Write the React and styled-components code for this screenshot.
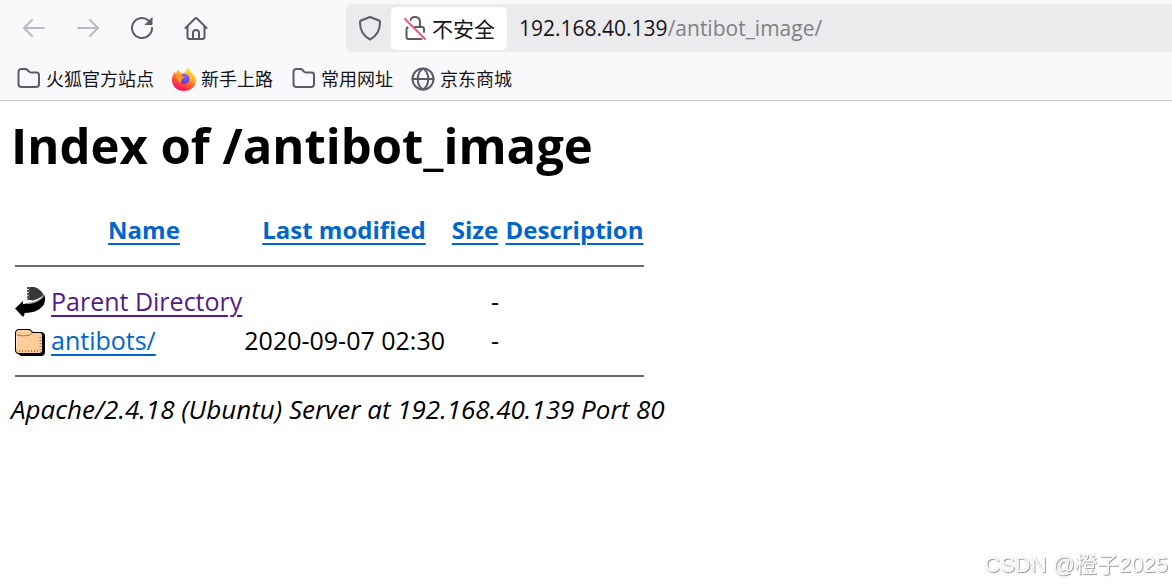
import { useState } from "react";
import styled, { createGlobalStyle } from "styled-components";

const GlobalStyle = createGlobalStyle`
  * {
    box-sizing: border-box;
  }

  body {
    margin: 0;
    background: #ffffff;
    color: #000000;
    font-family: "Open Sans", "Noto Sans CJK SC", sans-serif;
  }
`;

const Chrome = styled.header`
  background: #f9f9fb;
  border-bottom: 1px solid #cccccf;
`;

const NavBar = styled.nav`
  display: flex;
  align-items: center;
  height: 56px;
  padding-left: 7px;
`;

const NavButton = styled.button`
  display: flex;
  align-items: center;
  justify-content: center;
  width: 54px;
  height: 48px;
  padding: 0;
  border: 0;
  background: transparent;
  color: #5b5b66;
  opacity: ${props => (props.disabled ? 0.4 : 1)};
`;

const AddressBar = styled.div`
  display: flex;
  flex: 1;
  align-items: center;
  height: 48px;
  margin-left: 123px;
  padding-left: 12px;
  border-radius: 6px 0 0 6px;
  background: #ebebed;
  color: #5b5b66;
  font-size: 21px;
`;

const SecurityButton = styled.button`
  display: flex;
  align-items: center;
  gap: 4px;
  height: 43px;
  margin: 0 12px 0 9px;
  padding: 0 12px;
  border: 0;
  border-radius: 5px;
  background: #ffffff;
  color: #15141a;
  font: inherit;
  white-space: nowrap;

  svg {
    color: #5b5b66;
  }
`;

const Host = styled.label`
  color: #15141a;
`;

const UrlInput = styled.input`
  flex: 1;
  min-width: 0;
  padding: 0;
  border: 0;
  outline: 0;
  background: transparent;
  color: #808083;
  font: inherit;
`;

const Bookmarks = styled.div`
  display: flex;
  align-items: center;
  gap: 18px;
  height: 44px;
  padding: 2px 16px 0;
`;

const Bookmark = styled.a`
  display: flex;
  align-items: center;
  gap: 5px;
  color: #15141a;
  font-size: 18px;
  line-height: 24px;
  text-decoration: none;
  white-space: nowrap;

  svg {
    color: #5b5b66;
  }
`;

const Page = styled.main`
  padding: 8px 11px;
  font-size: 25px;
  line-height: 36px;
`;

const Title = styled.h1`
  margin: 0 0 30px;
  font-size: 49px;
  line-height: 72px;
`;

const Listing = styled.table`
  margin-left: 1px;
  border-collapse: collapse;
  table-layout: fixed;
  width: 635px;
`;

const Col = styled.col`
  width: ${props => props.$width}px;
`;

const HeadCell = styled.th`
  padding: 0;
  height: 38px;
  font-size: 24px;
  text-align: center;
  white-space: nowrap;
`;

const Cell = styled.td`
  height: 39px;
  padding: 0 3px;
  text-align: ${props => props.$align || "left"};
  white-space: nowrap;
`;

const IconCell = styled(Cell)`
  padding-top: 4px;

  svg {
    display: block;
  }
`;

const RuleCell = styled.td`
  padding: 16px 3px 14px;
`;

const Rule = styled.hr`
  height: 2px;
  margin: 0;
  border: 0;
  background: #6b6b6b;
`;

const Link = styled.a`
  color: ${props => (props.$visited ? "#551a8b" : "#0066cc")};
  text-decoration-thickness: 2px;
  text-underline-offset: 4px;
`;

const Address = styled.address`
  font-size: 26px;
  font-style: italic;
`;

const Watermark = styled.div`
  position: fixed;
  right: 4px;
  bottom: 4px;
  color: #ffffff;
  font-family: "Liberation Sans", "Noto Sans CJK SC", sans-serif;
  font-size: 22px;
  line-height: 32px;
  text-shadow: 1px 1px 1px #999999, 0 0 1px #bbbbbb;
`;

const stroke = {
  fill: "none",
  stroke: "currentColor",
  strokeWidth: 2,
  strokeLinecap: "round",
  strokeLinejoin: "round",
};

const BackIcon = () => (
  <svg width="24" height="24" viewBox="0 0 24 24" {...stroke}>
    <path d="M22 12H2M10 4L2 12l8 8" />
  </svg>
);

const ForwardIcon = () => (
  <svg width="24" height="24" viewBox="0 0 24 24" {...stroke}>
    <path d="M2 12h20M14 4l8 8-8 8" />
  </svg>
);

const ReloadIcon = () => (
  <svg width="24" height="24" viewBox="0 0 24 24" {...stroke}>
    <path d="M22 12A10 10 0 1 1 18.5 4.4" />
    <path d="M22 2v6.5h-6.5z" fill="currentColor" strokeWidth="1" />
  </svg>
);

const HomeIcon = () => (
  <svg width="24" height="24" viewBox="0 0 24 24" {...stroke}>
    <path d="M1.5 12L11 2.5q1-1 2 0L22.5 12M3.5 10.500V21q0 2 2 2h13q2 0 2-2V10.500" />
    <path d="M9 23v-6q0-3 3-3t3 3v6" />
  </svg>
);

const ShieldIcon = () => (
  <svg width="24" height="26" viewBox="0 0 24 26" {...stroke}>
    <path d="M12 2L21 5.500q1 .5 1 2C22 16 18.500 21 12 24.500C5.500 21 2 16 2 7.500q0-1.500 1-2z" />
  </svg>
);

const InsecureIcon = () => (
  <svg width="25" height="26" viewBox="0 0 25 26" {...stroke}>
    <path d="M7.500 5C9 .5 17 1 17 7v5h2q2 0 2 2v3M4.500 12.500q-1 .5-1 2V22q0 2 2 2h13M12 12h5" />
    <path d="M2 4l20 20" stroke="#ff4f6b" />
  </svg>
);

const FolderIcon = () => (
  <svg width="25" height="24" viewBox="0 0 25 24" {...stroke}>
    <path d="M2.500 5q0-3 3-3h4q1.300 0 2 1l1.400 1.500q.8 1 2.300 1h5.500q2.300 0 2.300 3V17q0 3-3 3H5.500q-3 0-3-3z" />
  </svg>
);

const GlobeIcon = () => (
  <svg width="24" height="24" viewBox="0 0 24 24" {...stroke}>
    <circle cx="12" cy="12" r="10.500" />
    <path d="M1.500 12h21M12 1.500C5 6 5 18 12 22.500M12 1.500c7 4.500 7 16.500 0 21" />
  </svg>
);

const FirefoxIcon = () => (
  <svg width="24" height="24" viewBox="0 0 24 24">
    <defs>
      <linearGradient id="flame" x1="0.8" y1="0.05" x2="0.3" y2="1">
        <stop offset="0" stopColor="#fff44f" />
        <stop offset="0.35" stopColor="#ffb02e" />
        <stop offset="0.65" stopColor="#ff5634" />
        <stop offset="1" stopColor="#f50770" />
      </linearGradient>
      <radialGradient id="core" cx="0.6" cy="0.3" r="0.8">
        <stop offset="0" stopColor="#9059ff" />
        <stop offset="1" stopColor="#4c3fc4" />
      </radialGradient>
    </defs>
    <path
      fill="url(#flame)"
      d="M15.500 0c2 2 2.500 4 4 5.500c3 2 4.500 5 4.500 8C24 19.500 18.500 24 12 24S0 19.500 0 13C0 9.500 1 7 3 4.500c.2 1 .5 1.800 1 2.300C5 5 5 4 6.500 2.500c.3 2 1.500 3.300 3.500 3.900C13 5.500 15 3.500 15.500 0z"
    />
    <circle cx="12.500" cy="12" r="5" fill="url(#core)" />
    <path fill="#ff9828" d="M4 8c3-2 5-1 6 1.200c2 .1 2.500.3 2.500.8c-.5 1.300-2.300 1.300-3 2.800c-.5 1.300.5 2.200-.8 2.400C7 16 4 12 4 8z" />
    <path fill="#ffbd30" d="M14 6.500c4 .5 5 4 4 7.500c2-1 3-5 1-8z" />
  </svg>
);

const ParentIcon = () => (
  <svg width="30" height="33" viewBox="0 0 30 33">
    <path fill="#383838" d="M14 1h5c4 1 8 4 9.500 8c-3 3-7 4.500-11 5.500L13 13.500z" />
    <path d="M13.500 1v13" stroke="#555555" strokeWidth="3" strokeDasharray="2 1" />
    <path d="M29.500 9q1 4 0 8C27 23 20 27 9.500 27v1.500L8 31L0 22.500L8 15v3C17 18.500 25 16 29.500 9z" />
    <path d="M10 17.500C19 17.500 26 14 29 9" fill="none" stroke="#555555" strokeWidth="0.7" />
  </svg>
);

const DirIcon = () => (
  <svg width="30" height="28" viewBox="0 0 30 28">
    <path d="M3 1h12l3 3h9q3 1 3 4v16q0 4-4 4H6l-3-2q-3-1-3-4V5q0-3 3-4z" />
    <path fill="#ffcc99" d="M4 2h9q3 0 4 3h8q2 0 2 2v15q0 3-3 3H4q-3 0-3-3V5q0-3 3-3z" />
    <path d="M2 7q6 1.500 11 .5q3-.5 4-2.500" fill="none" stroke="#a8764a" />
    <path d="M4 23h21M25.500 22V9" fill="none" stroke="#b07a48" strokeWidth="2" strokeDasharray="1 2" />
    <path d="M1.500 8v12M4 3.500h9" stroke="#ffe5cc" />
  </svg>
);

const bookmarks = [
  { name: "火狐官方站点", Icon: FolderIcon },
  { name: "新手上路", Icon: FirefoxIcon },
  { name: "常用网址", Icon: FolderIcon },
  { name: "京东商城", Icon: GlobeIcon },
];

const columns = ["Name", "Last modified", "Size", "Description"];

const entries = [
  { name: "Parent Directory", modified: "", Icon: ParentIcon, visited: true },
  { name: "antibots/", modified: "2020-09-07 02:30", Icon: DirIcon },
];

function BrowserChrome() {
  const [path, setPath] = useState("/antibot_image/");

  return (
    <Chrome>
      <NavBar>
        <NavButton aria-label="Back" disabled>
          <BackIcon />
        </NavButton>
        <NavButton aria-label="Forward" disabled>
          <ForwardIcon />
        </NavButton>
        <NavButton aria-label="Reload">
          <ReloadIcon />
        </NavButton>
        <NavButton aria-label="Home">
          <HomeIcon />
        </NavButton>
        <AddressBar>
          <ShieldIcon />
          <SecurityButton>
            <InsecureIcon />
            不安全
          </SecurityButton>
          <Host htmlFor="url">192.168.40.139</Host>
          <UrlInput id="url" value={path} onChange={e => setPath(e.target.value)} />
        </AddressBar>
      </NavBar>
      <Bookmarks>
        {bookmarks.map(({ name, Icon }) => (
          <Bookmark key={name} href="#">
            <Icon />
            {name}
          </Bookmark>
        ))}
      </Bookmarks>
    </Chrome>
  );
}

function DirectoryListing() {
  return (
    <Listing>
      <colgroup>
        <Col $width={36} />
        <Col $width={192} />
        <Col $width={208} />
        <Col $width={54} />
        <Col $width={145} />
      </colgroup>
      <thead>
        <tr>
          <HeadCell as="td" />
          {columns.map(column => (
            <HeadCell key={column} scope="col">
              <Link href="#">{column}</Link>
            </HeadCell>
          ))}
        </tr>
      </thead>
      <tbody>
        <tr>
          <RuleCell colSpan={5}>
            <Rule />
          </RuleCell>
        </tr>
        {entries.map(({ name, modified, Icon, visited }) => (
          <tr key={name}>
            <IconCell>
              <Icon />
            </IconCell>
            <Cell>
              <Link href="#" $visited={visited}>
                {name}
              </Link>
            </Cell>
            <Cell $align="right">{modified}</Cell>
            <Cell $align="right">-</Cell>
            <Cell />
          </tr>
        ))}
        <tr>
          <RuleCell colSpan={5}>
            <Rule />
          </RuleCell>
        </tr>
      </tbody>
    </Listing>
  );
}

function App() {
  return (
    <>
      <GlobalStyle />
      <BrowserChrome />
      <Page>
        <Title>Index of /antibot_image</Title>
        <DirectoryListing />
        <Address>Apache/2.4.18 (Ubuntu) Server at 192.168.40.139 Port 80</Address>
      </Page>
      <Watermark>CSDN @橙子2025</Watermark>
    </>
  );
}

export default App;
